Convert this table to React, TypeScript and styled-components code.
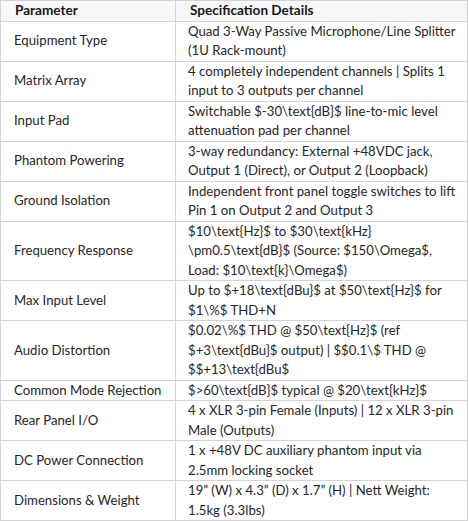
import styled, { createGlobalStyle } from "styled-components";

const GlobalStyle = createGlobalStyle`
  html, body {
    margin: 0;
    padding: 0;
    background: #ffffff;
  }
`;

const Table = styled.table`
  width: 468px;
  table-layout: fixed;
  border-collapse: collapse;
  font-family: Lato, "Open Sans", sans-serif;
  font-size: 13.2px;
  line-height: 19.5px;
  color: #262626;
`;

const HeadCell = styled.th`
  border: 1px solid #d4d4d4;
  background: #f7f7f7;
  padding: 0 12px 0 14px;
  font-weight: 700;
  font-size: 13.6px;
  text-align: left;
  white-space: nowrap;
  color: #1a1a1a;
`;

const ParamCell = styled.td`
  border: 1px solid #d4d4d4;
  padding: 0 8px 0 13px;
  vertical-align: middle;
  white-space: nowrap;
`;

const DetailCell = styled.td`
  border: 1px solid #d4d4d4;
  padding: 0 4px 0 12px;
  vertical-align: top;
  overflow: hidden;
`;

const Line = styled.div`
  white-space: nowrap;
`;

const specs: [string, string[]][] = [
  ["Equipment Type", ["Quad 3-Way Passive Microphone/Line Splitter", "(1U Rack-mount)"]],
  ["Matrix Array", ["4 completely independent channels | Splits 1", "input to 3 outputs per channel"]],
  ["Input Pad", ["Switchable $-30\\text{dB}$ line-to-mic level", "attenuation pad per channel"]],
  ["Phantom Powering", ["3-way redundancy: External +48VDC jack,", "Output 1 (Direct), or Output 2 (Loopback)"]],
  ["Ground Isolation", ["Independent front panel toggle switches to lift", "Pin 1 on Output 2 and Output 3"]],
  [
    "Frequency Response",
    [
      "$10\\text{Hz}$ to $30\\text{kHz}",
      "\\pm0.5\\text{dB}$ (Source: $150\\Omega$,",
      "Load: $10\\text{k}\\Omega$)",
    ],
  ],
  ["Max Input Level", ["Up to $+18\\text{dBu}$ at $50\\text{Hz}$ for", "$1\\%$ THD+N"]],
  [
    "Audio Distortion",
    [
      "$0.02\\%$ THD @ $50\\text{Hz}$ (ref",
      "$+3\\text{dBu}$ output) | $$0.1\\$ THD @",
      "$$+13\\text{dBu$",
    ],
  ],
  ["Common Mode Rejection", ["$>60\\text{dB}$ typical @ $20\\text{kHz}$"]],
  ["Rear Panel I/O", ["4 x XLR 3-pin Female (Inputs) | 12 x XLR 3-pin", "Male (Outputs)"]],
  ["DC Power Connection", ["1 x +48V DC auxiliary phantom input via", "2.5mm locking socket"]],
  ["Dimensions & Weight", ["19\u201D (W) x 4.3\u201D (D) x 1.7\u201D (H) | Nett Weight:", "1.5kg (3.3lbs)"]],
];

const App = () => (
  <>
    <GlobalStyle />
    <Table>
      <colgroup>
        <col style={{ width: 175 }} />
        <col />
      </colgroup>
      <thead>
        <tr>
          <HeadCell>Parameter</HeadCell>
          <HeadCell>Specification Details</HeadCell>
        </tr>
      </thead>
      <tbody>
        {specs.map(([name, lines]) => (
          <tr key={name}>
            <ParamCell>{name}</ParamCell>
            <DetailCell>
              {lines.map((l) => (
                <Line key={l}>{l}</Line>
              ))}
            </DetailCell>
          </tr>
        ))}
      </tbody>
    </Table>
  </>
);

export default App;
